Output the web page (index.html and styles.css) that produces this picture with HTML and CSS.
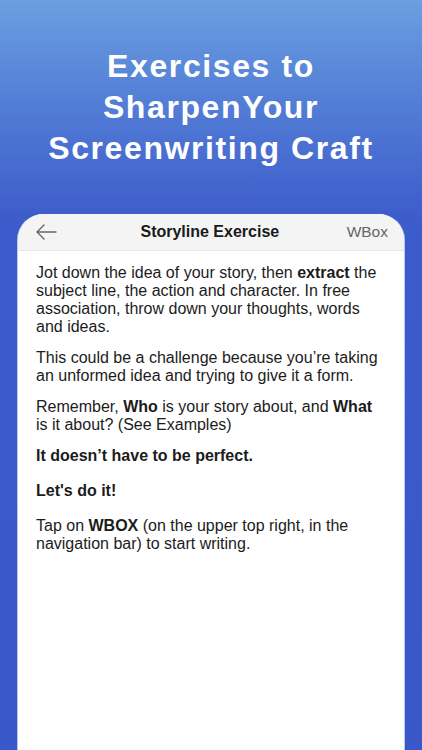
FILE: index.html
```html
<!DOCTYPE html>
<html>
<head>
    <title>Storyline Exercise</title>
    <link rel="stylesheet" href="styles.css">
</head>
<body>
    <!-- Promo Header -->
    <header class="promo">
        <h1>Exercises to<br>SharpenYour<br>Screenwriting Craft</h1>
    </header>

    <!-- Phone Screen -->
    <div class="phone">
        <nav class="navbar">
            <svg class="back" width="22" height="16" viewBox="0 0 22 16">
                <path d="M21 8H2M9 1L2 8l7 7" fill="none" stroke="#666" stroke-width="1.4" stroke-linecap="round" stroke-linejoin="round"/>
            </svg>
            <span class="nav-title">Storyline Exercise</span>
            <span class="nav-action">WBox</span>
        </nav>

        <main class="content">
            <p>Jot down the idea of your story, then <b>extract</b> the subject line, the action and character. In free association, throw down your thoughts, words and ideas.</p>
            <p>This could be a challenge because you’re taking an unformed idea and trying to give it a form.</p>
            <p>Remember, <b>Who</b> is your story about, and <b>What</b> is it about? (See Examples)</p>
            <p class="strong">It doesn’t have to be perfect.</p>
            <p class="strong">Let's do it!</p>
            <p>Tap on <b>WBOX</b> (on the upper top right, in the navigation bar) to start writing.</p>
        </main>
    </div>
</body>
</html>
```

FILE: styles.css
```css
html, body {
    height: 100%;
}
body {
    font-family: "Liberation Sans", Arial, sans-serif;
    background: linear-gradient(to bottom, #6a9fe0 0px, #4f78d4 120px, #3d5ccb 220px, #3957c8 750px);
    margin: 0;
    padding: 0;
    overflow: hidden;
    display: flex;
    flex-direction: column;
}
.promo {
    padding-top: 46px;
    text-align: center;
}
.promo h1 {
    margin: 0;
    color: white;
    font-size: 32px;
    line-height: 41px;
    font-weight: bold;
    letter-spacing: 1.6px;
}
.phone {
    margin: 45px 18px 0 18px;
    flex: 1;
    background-color: white;
    border-radius: 26px 26px 0 0;
    overflow: hidden;
    box-shadow: -1px 0 0 #b9c8ef, 1px 0 0 #b9c8ef;
}
.navbar {
    height: 36px;
    background-color: #f4f4f4;
    border-bottom: 1px solid #e6e6e6;
    display: flex;
    align-items: center;
    justify-content: space-between;
    padding: 0 16px 0 17px;
}
.back {
    display: block;
}
.nav-title {
    font-size: 16px;
    font-weight: bold;
    color: #1a1a1a;
    margin-left: 16px;
}
.nav-action {
    font-size: 15.5px;
    color: #666;
}
.content {
    padding: 13px 16px 0 18px;
    color: #1c1c1c;
    font-size: 16px;
    line-height: 18px;
}
.content p {
    margin: 0 0 13px 0;
}
.content p.strong {
    font-weight: bold;
    margin-bottom: 17px;
}
```
